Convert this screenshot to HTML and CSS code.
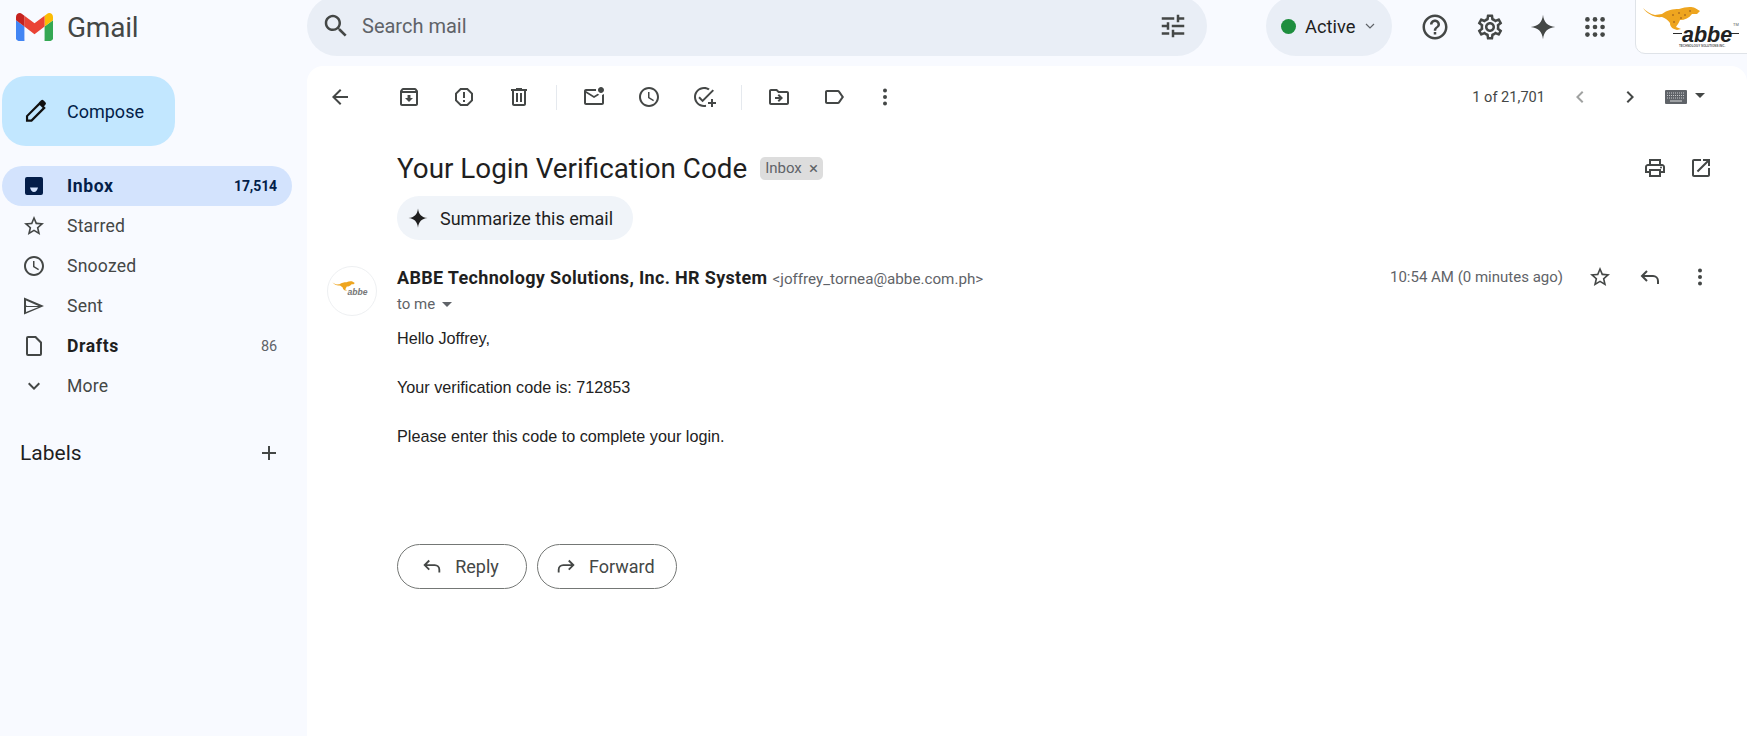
FILE: index.html
```html
<!DOCTYPE html>
<html lang="en">
<head>
<meta charset="utf-8">
<title>Your Login Verification Code - Gmail</title>
<link rel="stylesheet" href="styles.css">
</head>
<body>
<div class="app">
  <header class="topbar">
    <div class="brand">
      <svg class="gmail-logo" viewBox="52 42 88 66"><path fill="#4285f4" d="M58 108h14V74L52 59v43c0 3.32 2.69 6 6 6"/><path fill="#34a853" d="M120 108h14c3.32 0 6-2.69 6-6V59l-20 15"/><path fill="#fbbc04" d="M120 48v26l20-15v-8c0-7.42-8.47-11.65-14.4-7.2"/><path fill="#ea4335" d="M72 74V48l24 18 24-18v26L96 92"/><path fill="#c5221f" d="M52 51v8l20 15V48l-5.6-4.2c-5.94-4.45-14.4-.22-14.4 7.2"/></svg>
      <span class="brand-name">Gmail</span>
    </div>
    <div class="search">
      <svg class="ic ic-30" viewBox="0 0 24 24"><path d="M15.5 14h-.79l-.28-.27C15.41 12.59 16 11.11 16 9.5 16 5.91 13.09 3 9.5 3S3 5.91 3 9.5 5.91 16 9.5 16c1.61 0 3.09-.59 4.23-1.57l.27.28v.79l5 4.99L20.49 19l-4.99-5zm-6 0C7.01 14 5 11.99 5 9.5S7.01 5 9.5 5 14 7.01 14 9.5 11.99 14 9.5 14z"/></svg>
      <span class="search-text">Search mail</span>
      <svg class="ic ic-30" viewBox="0 0 24 24"><path d="M3 17v2h6v-2H3zM3 5v2h10V5H3zm10 16v-2h8v-2h-8v-2h-2v6h2zM7 9v2H3v2h4v2h2V9H7zm14 4v-2H11v2h10zm-6-4h2V7h4V5h-4V3h-2v6z"/></svg>
    </div>
    <div class="status">
      <span class="status-dot"></span>
      <span class="status-text">Active</span>
      <svg class="status-chev" viewBox="0 0 12 12"><path d="M2 4l4 4 4-4" fill="none" stroke="#5f6368" stroke-width="1.2"/></svg>
    </div>
    <div class="top-icons">
      <svg class="ic ic-30 top-help" viewBox="0 0 24 24"><path d="M11 18h2v-2h-2v2zm1-16C6.48 2 2 6.48 2 12s4.48 10 10 10 10-4.48 10-10S17.52 2 12 2zm0 18c-4.41 0-8-3.59-8-8s3.59-8 8-8 8 3.59 8 8-3.59 8-8 8zm0-14c-2.21 0-4 1.79-4 4h2c0-1.1.9-2 2-2s2 .9 2 2c0 2-3 1.75-3 5h2c0-2.25 3-2.5 3-5 0-2.21-1.79-4-4-4z"/></svg>
      <svg class="ic ic-30" viewBox="0 0 24 24"><path d="M19.43 12.98c.04-.32.07-.64.07-.98 0-.34-.03-.66-.07-.98l2.11-1.65c.19-.15.24-.42.12-.64l-2-3.46c-.09-.16-.26-.25-.44-.25-.06 0-.12.01-.17.03l-2.49 1c-.52-.4-1.08-.73-1.69-.98l-.38-2.65C14.46 2.18 14.25 2 14 2h-4c-.25 0-.46.18-.49.42l-.38 2.65c-.61.25-1.17.59-1.69.98l-2.49-1c-.06-.02-.12-.03-.18-.03-.17 0-.34.09-.43.25l-2 3.46c-.13.22-.07.49.12.64l2.11 1.65c-.04.32-.07.65-.07.98 0 .33.03.66.07.98l-2.11 1.65c-.19.15-.24.42-.12.64l2 3.46c.09.16.26.25.44.25.06 0 .12-.01.17-.03l2.49-1c.52.4 1.08.73 1.69.98l.38 2.65c.03.24.24.42.49.42h4c.25 0 .46-.18.49-.42l.38-2.65c.61-.25 1.17-.59 1.69-.98l2.49 1c.06.02.12.03.18.03.17 0 .34-.09.43-.25l2-3.46c.12-.22.07-.49-.12-.64l-2.11-1.65zm-1.98-1.71c.04.31.05.52.05.73 0 .21-.02.43-.05.73l-.14 1.13.89.7 1.08.84-.7 1.21-1.27-.51-1.04-.42-.9.68c-.43.32-.84.56-1.25.73l-1.06.43-.16 1.13-.2 1.35h-1.4l-.19-1.35-.16-1.13-1.06-.43c-.43-.18-.83-.41-1.23-.71l-.91-.7-1.06.43-1.27.51-.7-1.21 1.08-.84.89-.7-.14-1.13c-.03-.31-.05-.54-.05-.74s.02-.43.05-.73l.14-1.13-.89-.7-1.08-.84.7-1.21 1.27.51 1.04.42.9-.68c.43-.32.84-.56 1.25-.73l1.06-.43.16-1.13.2-1.35h1.39l.19 1.35.16 1.13 1.06.43c.43.18.83.41 1.23.71l.91.7 1.06-.43 1.27-.51.7 1.21-1.07.85-.89.7.14 1.13zM12 8c-2.21 0-4 1.79-4 4s1.79 4 4 4 4-1.79 4-4-1.79-4-4-4zm0 6c-1.1 0-2-.9-2-2s.9-2 2-2 2 .9 2 2-.9 2-2 2z"/></svg>
      <svg class="ic ic-28" viewBox="0 0 24 24"><path d="M12 1.5C12.7 8 16 11.3 22.5 12 16 12.7 12.7 16 12 22.5 11.3 16 8 12.7 1.5 12 8 11.3 11.3 8 12 1.5Z"/></svg>
      <svg class="ic ic-28" viewBox="0 0 24 24"><circle cx="5.5" cy="5.5" r="2"/><circle cx="12" cy="5.5" r="2"/><circle cx="18.5" cy="5.5" r="2"/><circle cx="5.5" cy="12" r="2"/><circle cx="12" cy="12" r="2"/><circle cx="18.5" cy="12" r="2"/><circle cx="5.5" cy="18.5" r="2"/><circle cx="12" cy="18.5" r="2"/><circle cx="18.5" cy="18.5" r="2"/></svg>
    </div>
    <div class="account">
      <svg class="abbe-logo" viewBox="0 0 100 50">
        <path fill="#eea51f" d="M0 2C3 5 7 8 12 9L19 8C24 4 30 3 36 3C42 1 48 0 52 2L57 5L54 8L49 8C46 12 42 14 37 14C36 17 34 19 33 21L38 23L34 24C30 23 27 21 27 17C25 14 22 12 19 11C12 12 4 8 0 2Z"/>
        <path fill="#c07d1e" d="M29 8h2v2h-2zM35 6h2v2h-2zM41 8h2v2h-2zM37 11h2v2h-2zM30 15h2v2h-2zM46 4h2v2h-2z"/>
        <path fill="#2b2b2b" d="M30 27h9v1h-9zM88 27h8v1h-8z"/>
        <text class="abbe-word" x="39" y="36">abbe</text>
        <text class="abbe-tm" x="90" y="20">TM</text>
        <text class="abbe-tag" x="36" y="41">TECHNOLOGY SOLUTIONS INC.</text>
      </svg>
    </div>
  </header>

  <div class="content">
    <nav class="sidebar">
      <button class="compose">
        <svg class="ic-compose" viewBox="0 0 24 24"><path d="M5 19.500v-3.700L15.500 5.300l3.700 3.700L8.700 19.500z" fill="none" stroke="#111" stroke-width="1.800"/><path d="M15 4.300l1.500-1.500a1.600 1.600 0 0 1 2.200 0l1.500 1.500a1.600 1.600 0 0 1 0 2.200l-1.500 1.500z" fill="#111"/></svg>
        <span>Compose</span>
      </button>
      <ul class="nav">
        <li class="nav-item is-active">
          <svg class="ic ic-24 nav-ic" viewBox="0 0 24 24"><path fill-rule="evenodd" d="M5 3h14a2 2 0 0 1 2 2v14a2 2 0 0 1-2 2H5a2 2 0 0 1-2-2V5a2 2 0 0 1 2-2zm3 10.500c.6 2.500 2 4.500 4 4.500s3.400-2 4-4.500z"/></svg>
          <span class="nav-label">Inbox</span><span class="nav-count">17,514</span>
        </li>
        <li class="nav-item">
          <svg class="ic ic-24 nav-ic" viewBox="0 0 24 24"><path d="M22 9.240l-7.190-.62L12 2 9.190 8.630 2 9.240l5.460 4.730L5.820 21 12 17.270 18.180 21l-1.630-7.030L22 9.240zM12 15.400l-3.760 2.270 1-4.280-3.320-2.880 4.380-.38L12 6.100l1.710 4.040 4.380.38-3.320 2.880 1 4.280L12 15.400z"/></svg>
          <span class="nav-label">Starred</span>
        </li>
        <li class="nav-item">
          <svg class="ic ic-24 nav-ic" viewBox="0 0 24 24"><path d="M11.990 2C6.470 2 2 6.480 2 12s4.470 10 9.990 10C17.520 22 22 17.520 22 12S17.520 2 11.990 2zM12 20c-4.420 0-8-3.580-8-8s3.580-8 8-8 8 3.580 8 8-3.580 8-8 8zM12.500 7H11v6l5.250 3.150.75-1.230-4.500-2.670z"/></svg>
          <span class="nav-label">Snoozed</span>
        </li>
        <li class="nav-item">
          <svg class="ic ic-24 nav-ic" viewBox="0 0 24 24"><path d="M2 3.500v17L22 12 2 3.500zm2 3l12.500 5.500H4.700L4 11zM4 13h12.500L4 18z" fill-rule="evenodd"/></svg>
          <span class="nav-label">Sent</span>
        </li>
        <li class="nav-item is-bold">
          <svg class="ic ic-24 nav-ic" viewBox="0 0 24 24"><path d="M14 2H6a2 2 0 0 0-2 2v16a2 2 0 0 0 2 2h12a2 2 0 0 0 2-2V8l-6-6zM6 20V4h7l5 5v11H6z"/></svg>
          <span class="nav-label">Drafts</span><span class="nav-count nav-count-light">86</span>
        </li>
        <li class="nav-item">
          <svg class="ic ic-24 nav-ic" viewBox="0 0 24 24"><path d="M7.410 8.590L12 13.170l4.590-4.580L18 10l-6 6-6-6z"/></svg>
          <span class="nav-label">More</span>
        </li>
      </ul>
      <div class="labels">
        <span>Labels</span>
        <svg class="ic ic-24" viewBox="0 0 24 24"><path d="M19 13h-6v6h-2v-6H5v-2h6V5h2v6h6v2z"/></svg>
      </div>
    </nav>

    <main class="main">
      <div class="toolbar">
        <div class="tool-group tool-back">
          <svg class="ic ic-24" viewBox="0 0 24 24"><path d="M20 11H7.830l5.590-5.590L12 4l-8 8 8 8 1.410-1.410L7.830 13H20v-2z"/></svg>
        </div>
        <div class="tool-group">
          <svg class="ic ic-24" viewBox="0 0 24 24"><path d="M20.540 5.230l-1.390-1.680C18.880 3.210 18.470 3 18 3H6c-.47 0-.88.21-1.160.55L3.460 5.230C3.170 5.570 3 6.020 3 6.500V19c0 1.100.9 2 2 2h14c1.100 0 2-.9 2-2V6.500c0-.48-.17-.93-.46-1.270zM6.240 5h11.520l.81.97H5.440l.8-.97zM5 19V8h14v11H5zm8.450-9h-2.900v3H8l4 4 4-4h-2.550z"/></svg>
          <svg class="ic ic-24" viewBox="0 0 24 24"><path d="M15.730 3H8.270L3 8.270v7.460L8.270 21h7.460L21 15.730V8.270L15.730 3zM19 14.900L14.900 19H9.100L5 14.900V9.100L9.100 5h5.800L19 9.100v5.800zM11 7h2v6h-2zM11 15h2v2h-2z"/></svg>
          <svg class="ic ic-24" viewBox="0 0 24 24"><path d="M15 4V3H9v1H4v2h1v13c0 1.100.9 2 2 2h10c1.100 0 2-.9 2-2V6h1V4h-5zm2 15H7V6h10v13zM9 8h2v9H9zm4 0h2v9h-2z"/></svg>
        </div>
        <span class="tool-sep"></span>
        <div class="tool-group">
          <svg class="ic ic-24" viewBox="0 0 24 24"><path d="M22 8.980V18c0 1.100-.9 2-2 2H4c-1.100 0-2-.9-2-2V6c0-1.100.9-2 2-2h10.100c-.06.32-.1.66-.1 1 0 .34.04.68.1 1H4l8 5 3.670-2.290c.47.43 1.020.76 1.630.98L12 13 4 8v10h16V9.900c.74-.15 1.420-.48 2-.92zM16 5c0 1.660 1.340 3 3 3s3-1.340 3-3-1.340-3-3-3-3 1.340-3 3z"/></svg>
          <svg class="ic ic-24" viewBox="0 0 24 24"><path d="M11.990 2C6.470 2 2 6.480 2 12s4.470 10 9.990 10C17.520 22 22 17.520 22 12S17.520 2 11.990 2zM12 20c-4.420 0-8-3.580-8-8s3.580-8 8-8 8 3.580 8 8-3.580 8-8 8zM12.500 7H11v6l5.250 3.150.75-1.230-4.500-2.670z"/></svg>
          <svg class="ic ic-24" viewBox="0 0 24 24"><path d="M12 2C6.480 2 2 6.480 2 12s4.480 10 10 10c.7 0 1.380-.07 2.040-.21v-2.050c-.65.170-1.330.26-2.040.26-4.420 0-8-3.580-8-8s3.580-8 8-8c1.580 0 3.040.46 4.280 1.250l1.440-1.440C16.100 2.670 14.130 2 12 2zM20.590 4.400L10.590 14.400l-2.830-2.830-1.410 1.410 4.240 4.240L22 5.810zM19 14v3h-3v2h3v3h2v-3h3v-2h-3v-3z"/></svg>
        </div>
        <span class="tool-sep"></span>
        <div class="tool-group">
          <svg class="ic ic-24" viewBox="0 0 24 24"><path d="M20 6h-8l-2-2H4c-1.100 0-2 .9-2 2v12c0 1.100.9 2 2 2h16c1.100 0 2-.9 2-2V8c0-1.100-.9-2-2-2zm0 12H4V6h5.170l2 2H20v10zM12.160 12H8v2h4.160l-1.590 1.590L11.990 17 16 13.010 11.990 9l-1.410 1.410z"/></svg>
          <svg class="ic ic-24" viewBox="0 0 24 24"><path d="M17.630 5.840C17.270 5.330 16.670 5 16 5L5 5.010C3.900 5.010 3 5.900 3 7v10c0 1.100.9 1.990 2 1.990L16 19c.67 0 1.270-.33 1.630-.84L22 12l-4.370-6.160zM16 17H5V7h11l3.550 5L16 17z"/></svg>
          <svg class="ic ic-24 tool-more" viewBox="0 0 24 24"><circle cx="12" cy="5.500" r="2"/><circle cx="12" cy="12" r="2"/><circle cx="12" cy="18.500" r="2"/></svg>
        </div>
        <div class="pager">
          <span class="pager-text">1 of 21,701</span>
          <svg class="ic ic-24 ic-faded" viewBox="0 0 24 24"><path d="M15.410 7.410L14 6l-6 6 6 6 1.410-1.410L10.830 12z"/></svg>
          <svg class="ic ic-24" viewBox="0 0 24 24"><path d="M8.590 16.590L10 18l6-6-6-6-1.410 1.410L13.170 12z"/></svg>
          <span class="kbd">
            <svg class="kbd-ic" viewBox="0 0 22 14"><rect width="22" height="14" rx="1" fill="#5f6368"/><path d="M2 3h18M2 5.500h18M2 8h18" stroke="#c8cacc" stroke-width="1.100" stroke-dasharray="1 1"/><path d="M5 11h12" stroke="#c8cacc" stroke-width="1.200"/></svg>
            <svg class="kbd-caret" viewBox="0 0 10 5"><path d="M0 0h10L5 5z" fill="#444746"/></svg>
          </span>
        </div>
      </div>

      <div class="thread">
        <div class="subject-row">
          <h1 class="subject">Your Login Verification Code</h1>
          <span class="chip">Inbox<span class="chip-x">×</span></span>
          <div class="subject-actions">
            <svg class="ic ic-24" viewBox="0 0 24 24"><path d="M19 8h-1V3H6v5H5c-1.660 0-3 1.340-3 3v6h4v4h12v-4h4v-6c0-1.660-1.340-3-3-3zM8 5h8v3H8V5zm8 12v2H8v-4h8v2zm2-2v-2H6v2H4v-4c0-.55.45-1 1-1h14c.55 0 1 .45 1 1v4h-2z"/><circle cx="18" cy="11.500" r="1"/></svg>
            <svg class="ic ic-24" viewBox="0 0 24 24"><path d="M19 19H5V5h7V3H5c-1.110 0-2 .9-2 2v14c0 1.100.89 2 2 2h14c1.100 0 2-.9 2-2v-7h-2v7zM14 3v2h3.590l-9.830 9.830 1.410 1.410L19 6.410V10h2V3h-7z"/></svg>
          </div>
        </div>
        <button class="summarize">
          <svg class="ic-spark" viewBox="0 0 24 24"><path d="M12 1.500C12.700 8 16 11.300 22.500 12 16 12.700 12.700 16 12 22.500 11.300 16 8 12.700 1.500 12 8 11.300 11.300 8 12 1.500Z"/></svg>
          <span>Summarize this email</span>
        </button>

        <article class="message">
          <div class="avatar">
            <svg class="avatar-logo" viewBox="0 0 100 50">
              <path fill="#eea51f" d="M0 2C3 5 7 8 12 9L19 8C24 4 30 3 36 3C42 1 48 0 52 2L57 5L54 8L49 8C46 12 42 14 37 14C36 17 34 19 33 21L38 23L34 24C30 23 27 21 27 17C25 14 22 12 19 11C12 12 4 8 0 2Z"/>
              <text class="abbe-word abbe-word-soft" x="39" y="36">abbe</text>
            </svg>
          </div>
          <div class="message-body">
            <div class="sender-row">
              <div class="sender">
                <span class="sender-name">ABBE Technology Solutions, Inc. HR System</span>
                <span class="sender-mail">&lt;joffrey_tornea@abbe.com.ph&gt;</span>
              </div>
              <div class="msg-meta">
                <span class="msg-time">10:54 AM (0 minutes ago)</span>
                <svg class="ic ic-24" viewBox="0 0 24 24"><path d="M22 9.240l-7.190-.62L12 2 9.190 8.630 2 9.240l5.460 4.730L5.820 21 12 17.270 18.180 21l-1.630-7.030L22 9.240zM12 15.400l-3.760 2.270 1-4.280-3.320-2.880 4.380-.38L12 6.100l1.710 4.040 4.380.38-3.320 2.880 1 4.280L12 15.400z"/></svg>
                <svg class="ic ic-24" viewBox="0 0 24 24"><path d="M9 6L4 11l5 5M4 11h11a5 5 0 0 1 5 5v3" fill="none" stroke="#444746" stroke-width="2"/></svg>
                <svg class="ic ic-24" viewBox="0 0 24 24"><circle cx="12" cy="5.500" r="2"/><circle cx="12" cy="12" r="2"/><circle cx="12" cy="18.500" r="2"/></svg>
              </div>
            </div>
            <div class="to-row">to me <svg class="to-caret" viewBox="0 0 10 5"><path d="M0 0h10L5 5z" fill="#5f6368"/></svg></div>
            <div class="mail-text">
              <p>Hello Joffrey,</p>
              <p>Your verification code is: 712853</p>
              <p>Please enter this code to complete your login.</p>
            </div>
            <div class="reply-row">
              <button class="pill pill-reply">
                <svg class="ic ic-22" viewBox="0 0 24 24"><path d="M9 6L4 11l5 5M4 11h11a5 5 0 0 1 5 5v3" fill="none" stroke="#444746" stroke-width="2"/></svg>
                <span>Reply</span>
              </button>
              <button class="pill">
                <svg class="ic ic-22" viewBox="0 0 24 24"><path d="M15 6l5 5-5 5M20 11H9a5 5 0 0 0-5 5v3" fill="none" stroke="#444746" stroke-width="2"/></svg>
                <span>Forward</span>
              </button>
            </div>
          </div>
        </article>
      </div>
    </main>
  </div>
</div>
</body>
</html>
```
FILE: styles.css
```css
* { box-sizing: border-box; }
html, body { margin: 0; height: 100%; }
body { background: #f8faff; color: #1f1f1f; font-family: "Roboto", "Noto Sans", sans-serif; overflow: hidden; }
button { font: inherit; border: 0; background: none; padding: 0; color: inherit; }
.app { height: 736px; display: flex; flex-direction: column; overflow: hidden; }
.ic { fill: #444746; flex: none; display: block; }
.ic-22 { width: 22px; height: 22px; }
.ic-24 { width: 24px; height: 24px; }
.ic-28 { width: 28px; height: 28px; }
.ic-30 { width: 30px; height: 30px; }
.ic-faded { opacity: .5; }

/* top bar */
.topbar { height: 66px; flex: none; display: flex; align-items: flex-start; }
.brand { width: 307px; flex: none; height: 54px; display: flex; align-items: center; padding-left: 16px; gap: 14px; }
.gmail-logo { width: 37px; height: 28px; }
.brand-name { font-size: 28px; color: #444746; letter-spacing: -.2px; }
.search { width: 900px; flex: none; height: 60px; margin-top: -4px; background: #e9eef6; border-radius: 30px; display: flex; align-items: center; padding: 0 19px 0 14px; }
.search-text { margin-left: 11px; font-size: 20px; color: #5f6368; flex: 1; }
.status { width: 126px; flex: none; height: 60px; margin: -4px 0 0 59px; background: #e9eef6; border-radius: 30px; display: flex; align-items: center; padding-left: 15px; }
.status-dot { width: 15px; height: 15px; border-radius: 50%; background: #1e8e3e; }
.status-text { margin-left: 9px; font-size: 18.300px; color: #1f1f1f; }
.status-chev { width: 12px; height: 12px; margin-left: 9px; }
.top-icons { display: flex; align-items: center; gap: 24px; margin: 12px 0 0 28px; flex: none; }
.top-help { margin-right: 1px; }
.account { width: 120px; height: 55px; margin: -1px 0 0 26px; background: #fff; border: 1px solid #dfe3e8; border-radius: 0 0 0 10px; padding: 6px 0 0 7px; flex: none; }
.abbe-logo { width: 100px; height: 50px; display: block; overflow: visible; }
.abbe-word { font: italic 700 21.500px "Liberation Sans", sans-serif; fill: #222; }
.abbe-word-soft { fill: #777; }
.abbe-tm { font: 400 4px "Liberation Sans", sans-serif; fill: #555; }
.abbe-tag { font: 700 3px "Liberation Sans", sans-serif; fill: #555; }

/* sidebar */
.content { flex: 1; display: flex; min-height: 0; }
.sidebar { width: 307px; flex: none; padding: 10px 0 0 2px; }
.compose { width: 173px; height: 70px; background: #c2e7ff; border-radius: 24px; display: flex; align-items: center; padding-left: 19px; gap: 17px; font-size: 18px; color: #041e49; }
.ic-compose { width: 29px; height: 29px; }
.nav { list-style: none; margin: 20px 0 0; padding: 0; width: 290px; }
.nav-item { height: 40px; display: flex; align-items: center; padding: 0 15px 0 20px; border-radius: 20px; font-size: 17.600px; letter-spacing: .2px; color: #444746; }
.nav-ic { margin-right: 21px; }
.nav-label { flex: 1; }
.nav-count { font-size: 14px; letter-spacing: -.1px; }
.nav-count-light { font-size: 14.500px; color: #5f6368; }
.is-active { background: #d3e3fd; color: #041e49; font-weight: 700; letter-spacing: .6px; }
.is-active .ic { fill: #041e49; }
.is-active .nav-count { font-weight: 700; }
.is-bold { font-weight: 700; color: #1f1f1f; letter-spacing: .6px; }
.is-bold .nav-count { font-weight: 400; color: #5f6368; }
.labels { width: 290px; margin-top: 35px; display: flex; justify-content: space-between; align-items: center; padding: 0 11px 0 18px; font-size: 21px; color: #1f1f1f; }

/* main panel */
.main { flex: 1; background: #fff; border-radius: 16px 16px 0 0; min-width: 0; }
.toolbar { height: 62px; display: flex; align-items: center; padding: 0 42px 0 21px; }
.tool-group { display: flex; gap: 31px; }
.tool-back { margin-right: 45px; }
.tool-sep { width: 1px; height: 25px; background: #e5e9ee; margin: 0 25px; }
.tool-more { margin-left: -4px; }
.pager { margin-left: auto; display: flex; align-items: center; gap: 26px; }
.pager-text { font-size: 14.600px; color: #444746; margin-right: -3px; }
.kbd { display: flex; align-items: center; gap: 8px; margin-left: -3px; }
.kbd-ic { width: 22px; height: 14px; }
.kbd-caret { width: 10px; height: 5px; margin-bottom: 3px; }

.thread { padding: 0 35px 0 20px; }
.subject-row { display: flex; align-items: center; padding-left: 70px; margin-top: 22px; height: 36px; }
.subject { margin: 0; font-size: 27.800px; font-weight: 400; color: #1f1f1f; }
.chip { margin-left: 13px; width: 63px; flex: none; display: flex; justify-content: space-between; background: #dddddd; border-radius: 5px; padding: 0 5px; height: 23px; line-height: 23px; font-size: 15px; color: #5f6368; }
.chip-x { color: #5f6368; font-size: 17px; }
.subject-actions { margin-left: auto; margin-right: -1px; display: flex; gap: 22px; }
.summarize { margin: 10px 0 0 70px; height: 44px; width: 236px; background: #f0f4f9; border-radius: 22px; display: flex; align-items: center; padding-left: 10px; gap: 11px; font-size: 18px; color: #1f1f1f; }
.ic-spark { width: 22px; height: 22px; fill: #1f1f1f; }
.message { display: flex; margin-top: 26px; }
.avatar { width: 50px; height: 50px; border: 1px solid #eef0f2; border-radius: 50%; flex: none; margin-right: 20px; display: flex; align-items: center; justify-content: center; }
.avatar-logo { width: 40px; height: 20px; }
.message-body { flex: 1; min-width: 0; }
.sender-row { display: flex; align-items: center; height: 28px; margin-top: -3px; }
.sender { flex: 1; display: flex; align-items: baseline; gap: 5px; }
.sender-name { font-size: 18px; font-weight: 700; letter-spacing: .33px; color: #1f1f1f; }
.sender-mail { font-size: 15.200px; color: #5f6368; }
.msg-meta { display: flex; align-items: center; gap: 26px; }
.msg-time { font-size: 15px; color: #5f6368; margin-right: -1px; }
.to-row { font-size: 15px; color: #5f6368; display: flex; align-items: center; gap: 7px; margin-top: 4px; height: 18px; }
.to-caret { width: 10px; height: 5px; }
.mail-text { font: 16.200px/24.500px "Liberation Sans", Arial, sans-serif; color: #222; margin-top: 13px; }
.mail-text p { margin: 0 0 24.500px; }
.reply-row { display: flex; gap: 10px; margin-top: 95px; }
.pill { height: 45px; border: 1px solid #747775; border-radius: 23px; display: flex; align-items: center; justify-content: center; padding: 0 21px 0 17px; gap: 12px; font-size: 18px; color: #444746; background: #fff; }
.pill-reply { width: 130px; }
```
